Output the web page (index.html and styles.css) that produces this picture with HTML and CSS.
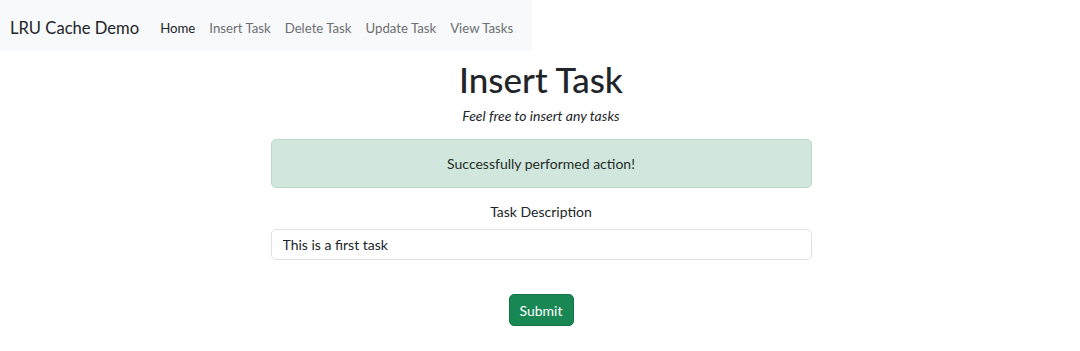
FILE: index.html
```html
<!DOCTYPE html>
<html lang="en">
<head>
  <meta charset="UTF-8" />
  <meta name="viewport" content="width=device-width, initial-scale=1.0"/>
  <title>Insert Task</title>
  <link rel="stylesheet" href="styles.css">
</head>
<body>

<nav class="navbar">
  <a class="brand" href="#">LRU Cache Demo</a>
  <ul class="nav-links">
    <li><a class="active" href="#">Home</a></li>
    <li><a href="#">Insert Task</a></li>
    <li><a href="#">Delete Task</a></li>
    <li><a href="#">Update Task</a></li>
    <li><a href="#">View Tasks</a></li>
  </ul>
</nav>

<main class="page">
  <h1>Insert Task</h1>
  <p class="lead"><em>Feel free to insert any tasks</em></p>

  <div class="alert">Successfully performed action!</div>

  <form class="task-form" action="#" method="post">
    <label for="desc">Task Description</label>
    <input type="text" id="desc" name="desc" value="This is a first task" />
    <button type="submit" class="btn">Submit</button>
  </form>
</main>

</body>
</html>
```

FILE: styles.css
```css
body {
  font-family: 'Lato', 'Noto Sans', sans-serif;
  background: #fff;
  color: #212529;
  margin: 0;
  font-size: 14px;
}

a {
  text-decoration: none;
}

.navbar {
  display: inline-flex;
  align-items: center;
  box-sizing: border-box;
  height: 51px;
  padding: 5px 12px 0 10px;
  background: #f8f9fa;
}

.brand {
  font-size: 16.6px;
  color: #212529;
  margin-right: 14px;
}

.nav-links {
  display: flex;
  list-style: none;
  margin: 0;
  padding: 0;
}

.nav-links a {
  display: block;
  padding: 0 7px;
  color: #6c6f73;
  font-size: 13.2px;
}

.nav-links a.active {
  color: #212529;
}

.page {
  width: 541px;
  margin: 0 auto;
  padding-left: 2px;
  text-align: center;
}

h1 {
  font-size: 35px;
  font-weight: 500;
  margin: 7px 0 0;
  line-height: 1.2;
}

.lead {
  margin: 7px 0 15px;
  font-size: 14px;
}

.alert {
  background: #d1e7dd;
  border: 1px solid #badbcc;
  border-radius: 5px;
  color: #1f2d26;
  padding: 14px;
  line-height: 19px;
}

.task-form {
  display: flex;
  flex-direction: column;
  align-items: center;
  margin-top: 15px;
}

.task-form label {
  margin-bottom: 9px;
}

.task-form input {
  box-sizing: border-box;
  width: 100%;
  height: 31px;
  padding: 0 11px;
  border: 1px solid #dee2e6;
  border-radius: 5px;
  font-family: inherit;
  font-size: 14px;
  color: #212529;
}

.btn {
  margin-top: 34px;
  background: #198754;
  color: #fff;
  border: 1px solid #157347;
  border-radius: 5px;
  padding: 0 10px;
  height: 32px;
  font-family: inherit;
  font-size: 14px;
  cursor: pointer;
}
```
